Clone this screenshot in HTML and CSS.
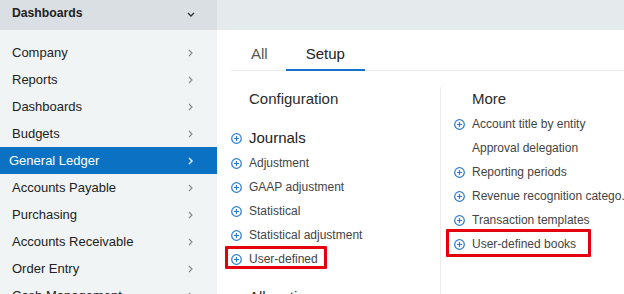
FILE: index.html
```html
<!DOCTYPE html>
<html lang="en">
<head>
  <meta charset="UTF-8">
  <title>General Ledger Setup</title>
  <link rel="stylesheet" href="styles.css">
</head>
<body>
  <div class="app">
    <nav class="sidebar">
      <div class="sidebar-header">
        <span>Dashboards</span>
        <svg class="chev-down" width="8" height="5" viewBox="0 0 8 5"><polyline points="1,1 4,4 7,1" fill="none" stroke="#333" stroke-width="1.4"/></svg>
      </div>
      <ul class="menu">
        <li>Company<svg class="chev" width="5" height="8" viewBox="0 0 5 8"><polyline points="1,1 4,4 1,7" fill="none" stroke="#8a8a8a" stroke-width="1.2"/></svg></li>
        <li>Reports<svg class="chev" width="5" height="8" viewBox="0 0 5 8"><polyline points="1,1 4,4 1,7" fill="none" stroke="#8a8a8a" stroke-width="1.2"/></svg></li>
        <li>Dashboards<svg class="chev" width="5" height="8" viewBox="0 0 5 8"><polyline points="1,1 4,4 1,7" fill="none" stroke="#8a8a8a" stroke-width="1.2"/></svg></li>
        <li>Budgets<svg class="chev" width="5" height="8" viewBox="0 0 5 8"><polyline points="1,1 4,4 1,7" fill="none" stroke="#8a8a8a" stroke-width="1.2"/></svg></li>
        <li class="active">General Ledger<svg class="chev" width="5" height="8" viewBox="0 0 5 8"><polyline points="1,1 4,4 1,7" fill="none" stroke="#fff" stroke-width="1.4"/></svg></li>
        <li>Accounts Payable<svg class="chev" width="5" height="8" viewBox="0 0 5 8"><polyline points="1,1 4,4 1,7" fill="none" stroke="#8a8a8a" stroke-width="1.2"/></svg></li>
        <li>Purchasing<svg class="chev" width="5" height="8" viewBox="0 0 5 8"><polyline points="1,1 4,4 1,7" fill="none" stroke="#8a8a8a" stroke-width="1.2"/></svg></li>
        <li>Accounts Receivable<svg class="chev" width="5" height="8" viewBox="0 0 5 8"><polyline points="1,1 4,4 1,7" fill="none" stroke="#8a8a8a" stroke-width="1.2"/></svg></li>
        <li>Order Entry<svg class="chev" width="5" height="8" viewBox="0 0 5 8"><polyline points="1,1 4,4 1,7" fill="none" stroke="#8a8a8a" stroke-width="1.2"/></svg></li>
        <li>Cash Management<svg class="chev" width="5" height="8" viewBox="0 0 5 8"><polyline points="1,1 4,4 1,7" fill="none" stroke="#8a8a8a" stroke-width="1.2"/></svg></li>
      </ul>
    </nav>

    <main class="main">
      <div class="topbar"></div>
      <div class="content">
        <div class="tabs">
          <div class="tab first">All</div>
          <div class="tab selected">Setup</div>
        </div>

        <div class="columns">
          <div class="col">
            <h3 class="col-title">Configuration</h3>
            <div class="group">
              <div class="group-title"><svg class="plus" width="11" height="11" viewBox="0 0 11 11"><circle cx="5.5" cy="5.5" r="4.8" fill="none" stroke="#2a7bd2" stroke-width="1.2"/><path d="M5.5 3v5M3 5.5h5" stroke="#2a7bd2" stroke-width="1.2"/></svg>Journals</div>
              <div class="item"><svg class="plus" width="11" height="11" viewBox="0 0 11 11"><circle cx="5.5" cy="5.5" r="4.8" fill="none" stroke="#2a7bd2" stroke-width="1.2"/><path d="M5.5 3v5M3 5.5h5" stroke="#2a7bd2" stroke-width="1.2"/></svg>Adjustment</div>
              <div class="item"><svg class="plus" width="11" height="11" viewBox="0 0 11 11"><circle cx="5.5" cy="5.5" r="4.8" fill="none" stroke="#2a7bd2" stroke-width="1.2"/><path d="M5.5 3v5M3 5.5h5" stroke="#2a7bd2" stroke-width="1.2"/></svg>GAAP adjustment</div>
              <div class="item"><svg class="plus" width="11" height="11" viewBox="0 0 11 11"><circle cx="5.5" cy="5.5" r="4.8" fill="none" stroke="#2a7bd2" stroke-width="1.2"/><path d="M5.5 3v5M3 5.5h5" stroke="#2a7bd2" stroke-width="1.2"/></svg>Statistical</div>
              <div class="item"><svg class="plus" width="11" height="11" viewBox="0 0 11 11"><circle cx="5.5" cy="5.5" r="4.8" fill="none" stroke="#2a7bd2" stroke-width="1.2"/><path d="M5.5 3v5M3 5.5h5" stroke="#2a7bd2" stroke-width="1.2"/></svg>Statistical adjustment</div>
              <div class="item hl hl-left"><svg class="plus" width="11" height="11" viewBox="0 0 11 11"><circle cx="5.5" cy="5.5" r="4.8" fill="none" stroke="#2a7bd2" stroke-width="1.2"/><path d="M5.5 3v5M3 5.5h5" stroke="#2a7bd2" stroke-width="1.2"/></svg>User-defined</div>
            </div>
            <h3 class="col-title next">Allocations</h3>
          </div>

          <div class="col right">
            <h3 class="col-title">More</h3>
            <div class="item"><svg class="plus" width="11" height="11" viewBox="0 0 11 11"><circle cx="5.5" cy="5.5" r="4.8" fill="none" stroke="#2a7bd2" stroke-width="1.2"/><path d="M5.5 3v5M3 5.5h5" stroke="#2a7bd2" stroke-width="1.2"/></svg>Account title by entity</div>
            <div class="item"><span class="plus-space"></span>Approval delegation</div>
            <div class="item"><svg class="plus" width="11" height="11" viewBox="0 0 11 11"><circle cx="5.5" cy="5.5" r="4.8" fill="none" stroke="#2a7bd2" stroke-width="1.2"/><path d="M5.5 3v5M3 5.5h5" stroke="#2a7bd2" stroke-width="1.2"/></svg>Reporting periods</div>
            <div class="item"><svg class="plus" width="11" height="11" viewBox="0 0 11 11"><circle cx="5.5" cy="5.5" r="4.8" fill="none" stroke="#2a7bd2" stroke-width="1.2"/><path d="M5.5 3v5M3 5.5h5" stroke="#2a7bd2" stroke-width="1.2"/></svg>Revenue recognition catego...</div>
            <div class="item"><svg class="plus" width="11" height="11" viewBox="0 0 11 11"><circle cx="5.5" cy="5.5" r="4.8" fill="none" stroke="#2a7bd2" stroke-width="1.2"/><path d="M5.5 3v5M3 5.5h5" stroke="#2a7bd2" stroke-width="1.2"/></svg>Transaction templates</div>
            <div class="item hl hl-right"><svg class="plus" width="11" height="11" viewBox="0 0 11 11"><circle cx="5.5" cy="5.5" r="4.8" fill="none" stroke="#2a7bd2" stroke-width="1.2"/><path d="M5.5 3v5M3 5.5h5" stroke="#2a7bd2" stroke-width="1.2"/></svg>User-defined books</div>
          </div>
        </div>
      </div>
    </main>
  </div>
</body>
</html>
```

FILE: styles.css
```css
html, body { margin: 0; height: 100%; overflow: hidden; }
body { font-family: "Liberation Sans", Arial, sans-serif; background-color: #fff; color: #222; }
.app { display: flex; height: 100%; }

.sidebar { width: 217px; flex-shrink: 0; background-color: #f0f4f5; }
.sidebar-header { height: 30px; width: 219px; box-sizing: border-box; padding: 4px 24px 0 12px; display: flex; align-items: center; justify-content: space-between; background-color: #d9dfe3; font-size: 12.2px; font-weight: bold; color: #222; }
.sidebar-header span { margin-top: -8px; }
.chev-down { margin-top: -6px; }
.menu { list-style: none; margin: 0; padding: 9px 0 0 0; }
.menu li { height: 27px; display: flex; align-items: center; justify-content: space-between; padding: 0 24px 0 12px; font-size: 13px; color: #222; }
.menu li.active { background-color: #0b72c3; color: #fff; padding-left: 9px; }

.main { flex: 1; min-width: 0; }
.topbar { height: 30px; background-color: #e5eaec; }
.content { padding: 0 0 0 14px; }

.tabs { display: flex; height: 40px; border-bottom: 1px solid #ececec; }
.tab { padding: 15px 20px 0 20px; font-size: 15px; color: #555; box-sizing: border-box; }
.tab.first { padding-right: 18px; }
.tab.selected { color: #222; border-bottom: 2px solid #1673c9; margin-bottom: -1px; }

.columns { display: flex; margin-top: 13px; }
.col { width: 209px; padding-top: 6px; }
.col.right { flex: 1; min-width: 0; border-left: 1px solid #ececec; border-top-left-radius: 6px; padding-left: 13px; white-space: nowrap; }
.col-title { margin: 0; font-size: 15px; font-weight: normal; line-height: 18px; color: #2b2b2b; padding-left: 18px; }
.col.right .col-title { margin-bottom: 4px; }
.col-title.next { margin-top: 17px; }

.group { margin-top: 21px; }
.group-title { display: flex; align-items: center; gap: 7px; font-size: 15px; line-height: 18px; color: #222; margin-bottom: 4px; }
.item { display: flex; align-items: center; gap: 7px; height: 24px; font-size: 12px; color: #444; }
.plus { flex-shrink: 0; }
.plus-space { width: 11px; flex-shrink: 0; }

.hl { position: relative; width: fit-content; }
.hl::after { content: ''; position: absolute; border: 3px solid #e5000d; border-radius: 1px; }
.hl-left::after { left: -6px; right: -9px; top: -1px; bottom: 2px; }
.hl-right::after { left: -8px; right: -15px; top: -3px; bottom: -1px; }
```
